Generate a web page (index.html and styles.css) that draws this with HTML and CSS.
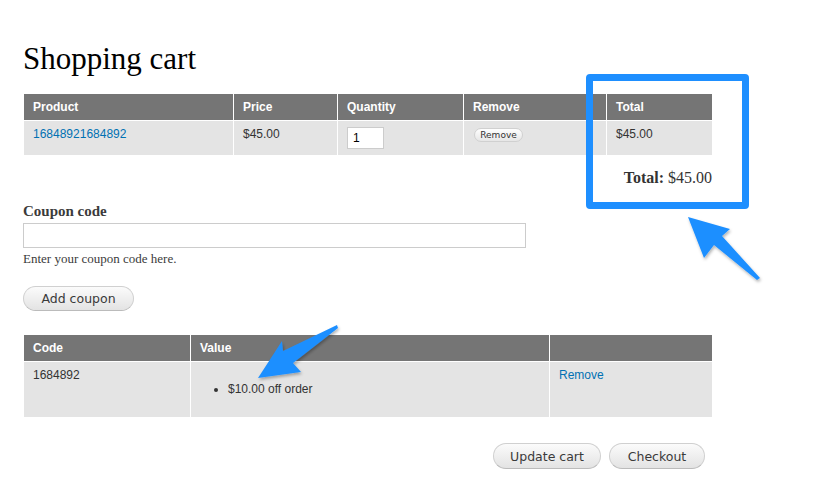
FILE: index.html
```html
<!DOCTYPE html>
<html lang="en">
<head>
	<meta charset="UTF-8" />
	<title>Shopping cart</title>
	<link rel="stylesheet" href="styles.css">
</head>
<body>
	<div class="page">
		<h1 class="title">Shopping cart</h1>

		<table class="cart">
			<thead>
				<tr>
					<th class="c-product">Product</th>
					<th class="c-price">Price</th>
					<th class="c-qty">Quantity</th>
					<th class="c-remove">Remove</th>
					<th class="c-total">Total</th>
				</tr>
			</thead>
			<tbody>
				<tr>
					<td><a href="#">16848921684892</a></td>
					<td>$45.00</td>
					<td><input class="qty" type="text" value="1"></td>
					<td><button class="btn-small">Remove</button></td>
					<td>$45.00</td>
				</tr>
			</tbody>
		</table>
		<div class="cart-total"><b>Total:</b> $45.00</div>

		<div class="coupon">
			<label class="coupon-label">Coupon code</label>
			<input class="coupon-input" type="text">
			<div class="coupon-help">Enter your coupon code here.</div>
			<button class="btn btn-coupon">Add coupon</button>
		</div>

		<table class="cart codes">
			<thead>
				<tr>
					<th class="c-code">Code</th>
					<th class="c-value">Value</th>
					<th></th>
				</tr>
			</thead>
			<tbody>
				<tr>
					<td>1684892</td>
					<td>
						<ul class="value-list">
							<li>$10.00 off order</li>
						</ul>
					</td>
					<td><a href="#">Remove</a></td>
				</tr>
			</tbody>
		</table>

		<div class="actions">
			<button class="btn btn-update">Update cart</button>
			<button class="btn btn-checkout">Checkout</button>
		</div>
	</div>

	<!-- annotations -->
	<div class="highlight"></div>
	<svg class="arrows" width="825" height="503" viewBox="0 0 825 503">
		<defs>
			<filter id="sh" x="-20%" y="-20%" width="140%" height="140%">
				<feDropShadow dx="1" dy="2" stdDeviation="1.5" flood-color="#000" flood-opacity="0.3"/>
			</filter>
		</defs>
		<polygon filter="url(#sh)" fill="#1e8fff" points="688,217 730,229 722,236 760,278 757,280 714,245 704,258"/>
		<polygon filter="url(#sh)" fill="#1e8fff" points="258,378 282,341 283,351 337,325 338,328 293,363 301,372"/>
	</svg>
</body>
</html>
```

FILE: styles.css
```css
body{
	margin:0;
	background:#fff;
	color:#3b3b3b;
	font-family:"Liberation Serif", serif;
}
.page{
	padding:0 0 0 23px;
	width:690px;
}
.title{
	margin:0;
	padding-top:39px;
	font-size:31px;
	line-height:40px;
	font-weight:normal;
	color:#000;
	height:55px;
}
.cart{
	margin-left:1px;
	width:688px;
	border-collapse:collapse;
	font-family:"Liberation Sans", sans-serif;
	font-size:12px;
	color:#333;
}
.cart th{
	background:#757575;
	color:#fff;
	text-align:left;
	font-weight:bold;
	height:26px;
	padding:0 9px;
	border-right:1px solid #fff;
	border-bottom:1px solid #fff;
}
.cart td{
	background:#e4e4e4;
	vertical-align:top;
	padding:6px 9px 6px;
	border-right:1px solid #fff;
	height:22px;
}
.cart th:last-child,.cart td:last-child{
	border-right:none;
}
.cart a{
	color:#0071b3;
	text-decoration:none;
}
.c-product{ width:191px; }
.c-price{ width:85px; }
.c-qty{ width:107px; }
.c-remove{ width:124px; }
.qty{
	width:37px;
	height:22px;
	box-sizing:border-box;
	border:1px solid #ccc;
	padding:2px 5px;
	font-size:12px;
	font-family:"Liberation Sans", sans-serif;
	margin:0;
}
.btn-small{
	margin:0 0 0 1px;
	height:14px;
	width:49px;
	padding:0;
	border:1px solid #d0d0d0;
	border-radius:8px;
	background:linear-gradient(#fefefe,#e6e6e6);
	font-family:"DejaVu Sans", sans-serif;
	font-size:9px;
	line-height:12px;
	color:#333;
}
.cart-total{
	width:689px;
	text-align:right;
	font-size:16px;
	color:#333;
	margin-top:14px;
	line-height:18px;
}
.coupon{
	margin-top:15px;
}
.coupon-label{
	display:block;
	font-weight:bold;
	font-size:15px;
	line-height:18px;
	color:#3b3b3b;
}
.coupon-input{
	display:block;
	margin-top:3px;
	width:503px;
	height:25px;
	box-sizing:border-box;
	border:1px solid #ccc;
}
.coupon-help{
	font-size:13px;
	line-height:16px;
	margin-top:3px;
	color:#3b3b3b;
}
.btn{
	display:block;
	height:25px;
	padding:0;
	border:1px solid #d0d0d0;
	border-bottom-color:#bbb;
	border-radius:13px;
	background:linear-gradient(#fbfbfb,#e3e3e3);
	font-family:"DejaVu Sans", sans-serif;
	font-size:12.5px;
	color:#3a3a3a;
	white-space:nowrap;
}
.btn-coupon{
	margin-top:19px;
	width:111px;
}
.codes{
	margin-top:24px;
}
.codes td{
	height:43px;
}
.c-code{ width:148px; }
.c-value{ width:340px; }
.value-list{
	margin:13px 0 0 0;
	padding-left:28px;
	line-height:16px;
}
.actions{
	display:flex;
	justify-content:flex-end;
	gap:8px;
	width:682px;
	margin-top:26px;
}
.btn-update{ width:108px; height:26px; }
.btn-checkout{ width:96px; height:26px; }
.highlight{
	position:absolute;
	left:586px;
	top:74px;
	width:149px;
	height:121px;
	border:7px solid #1e8fff;
	border-radius:4px;
}
.arrows{
	position:absolute;
	left:0;
	top:0;
	pointer-events:none;
}
```
